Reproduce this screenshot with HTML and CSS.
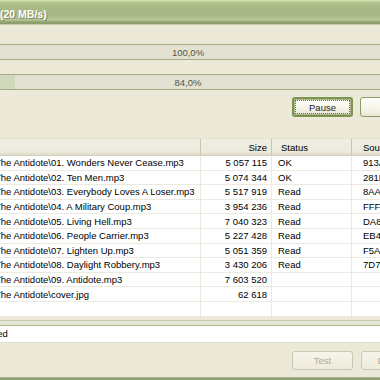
FILE: index.html
```html
<!DOCTYPE html>
<html>
<head>
<meta charset="utf-8">
<link rel="stylesheet" href="styles.css">
</head>
<body>
<div class="window">
  <div class="titlebar"><span class="title">(20 MB/s)</span></div>
  <div class="content">
    <div class="bar bar-one"><div class="fill fill-full"></div><span class="pct">100,0%</span></div>
    <div class="bar bar-two"><div class="fill" style="width:25px"></div><span class="pct">84,0%</span></div>
    <div class="actions">
      <button class="btn btn-default"><span class="focus">Pause</span></button>
      <button class="btn">Stop</button>
    </div>
    <div class="list">
      <div class="row head">
        <div class="c name"></div>
        <div class="c size">Size</div>
        <div class="c status">Status</div>
        <div class="c src">Source CRC</div>
      </div>
      <div class="row"><div class="c name">The Antidote\01. Wonders Never Cease.mp3</div><div class="c size">5 057 115</div><div class="c status">OK</div><div class="c src">913A42C1</div></div>
      <div class="row"><div class="c name">The Antidote\02. Ten Men.mp3</div><div class="c size">5 074 344</div><div class="c status">OK</div><div class="c src">281B77E0</div></div>
      <div class="row"><div class="c name">The Antidote\03. Everybody Loves A Loser.mp3</div><div class="c size">5 517 919</div><div class="c status">Read</div><div class="c src">8AA1C340</div></div>
      <div class="row"><div class="c name">The Antidote\04. A Military Coup.mp3</div><div class="c size">3 954 236</div><div class="c status">Read</div><div class="c src">FFF0921D</div></div>
      <div class="row"><div class="c name">The Antidote\05. Living Hell.mp3</div><div class="c size">7 040 323</div><div class="c status">Read</div><div class="c src">DA8E1F07</div></div>
      <div class="row"><div class="c name">The Antidote\06. People Carrier.mp3</div><div class="c size">5 227 428</div><div class="c status">Read</div><div class="c src">EB4C0A95</div></div>
      <div class="row"><div class="c name">The Antidote\07. Lighten Up.mp3</div><div class="c size">5 051 359</div><div class="c status">Read</div><div class="c src">F5A2B6D8</div></div>
      <div class="row"><div class="c name">The Antidote\08. Daylight Robbery.mp3</div><div class="c size">3 430 206</div><div class="c status">Read</div><div class="c src">7D7F3E11</div></div>
      <div class="row"><div class="c name">The Antidote\09. Antidote.mp3</div><div class="c size">7 603 520</div><div class="c status"></div><div class="c src"></div></div>
      <div class="row"><div class="c name">The Antidote\cover.jpg</div><div class="c size">62 618</div><div class="c status"></div><div class="c src"></div></div>
      <div class="row"><div class="c name"></div><div class="c size"></div><div class="c status"></div><div class="c src"></div></div>
    </div>
    <div class="sep"></div>
    <div class="log"><span class="log-text">Finished</span></div>
    <div class="actions bottom">
      <button class="btn" disabled>Test</button>
      <button class="btn" disabled>Delete</button>
    </div>
  </div>
  <div class="frame-bottom"></div>
</div>
</body>
</html>
```
FILE: styles.css
```css
html, body {
  margin: 0;
  padding: 0;
  width: 380px;
  height: 380px;
  overflow: hidden;
  background: #ece9d8;
}
body {
  font-family: "Liberation Sans", Arial, sans-serif;
  font-size: 9.5px;
  color: #000;
}
.window {
  width: 450px;
  margin-left: -10px;
  height: 380px;
  display: flex;
  flex-direction: column;
}
.titlebar {
  height: 24px;
  border-bottom: 1px solid #c3cca6;
  background: linear-gradient(to bottom, #dfe8bc 0, #c6d4a0 1px, #b1c18d 3px, #a7b785 9px, #a8b886 15px, #b6c696 20px, #a4b380 21px, #91a170 22px, #8c9b6b 24px);
  padding-left: 10px;
  display: flex;
  align-items: center;
}
.title {
  color: #fff;
  font-weight: bold;
  font-size: 10.5px;
  text-shadow: 1px 1px 0 #7d8d5c;
  margin-top: 3px;
}
.content {
  display: flex;
  flex-direction: column;
  flex: 1;
}
.bar {
  position: relative;
  height: 14px;
  border-top: 1px solid #a2ad86;
  border-bottom: 1px solid #a2ad86;
  background: #e2e1d2;
  display: flex;
  align-items: center;
  justify-content: center;
}
.bar-one { margin-top: 19px; }
.bar-two { margin-top: 14px; }
.fill {
  position: absolute;
  left: 0;
  top: 0;
  bottom: 0;
  background: #d1d7bb;
}
.fill-full { width: 0; }
.pct {
  position: relative;
  color: #55554a;
  font-size: 9.5px;
  margin-left: -54px;
  margin-top: 1px;
}
.actions {
  display: flex;
  justify-content: flex-end;
  gap: 7px;
  padding-right: 19px;
  margin-top: 7px;
}
.btn {
  width: 61px;
  height: 20px;
  border: 1px solid #8a9a68;
  border-radius: 3px;
  background: linear-gradient(to bottom, #fffff9 0, #f6f4e9 60%, #e8e5d2 100%);
  font-family: "Liberation Sans", Arial, sans-serif;
  font-size: 9.5px;
  color: #1c1c1c;
  padding: 0;
  display: flex;
  align-items: center;
  justify-content: center;
}
.btn-default {
  border: 2px solid #7c9450;
  box-shadow: inset 0 0 0 1px #a8b888;
}
.focus {
  display: flex;
  align-items: center;
  justify-content: center;
  width: 53px;
  height: 12px;
  outline: 1px dotted #6f6f60;
}
.btn:disabled {
  color: #aca899;
  border-color: #c9c7b6;
  background: linear-gradient(to bottom, #f6f4ea 0, #eeebdc 100%);
}
.list {
  margin-top: 21px;
  background: #fff;
}
.row {
  display: grid;
  grid-template-columns: 211px 71px 80px 88px;
  height: 14.6px;
  box-sizing: border-box;
  border-bottom: 1px solid #eceade;
  align-items: center;
  white-space: nowrap;
}
.row .c {
  overflow: hidden;
  height: 100%;
  display: flex;
  align-items: center;
  box-sizing: border-box;
  border-right: 1px solid #eceade;
}
.head {
  height: 18px;
  background: linear-gradient(to bottom, #efeee3 0, #ebeadc 80%, #dedac6 100%);
  border-bottom: 1px solid #d4d0bc;
  border-top: 1px solid #e4e2d2;
}
.head .c {
  border-right: 1px solid #c8c5b2;
}
.name { padding-left: 5px; }
.size { justify-content: flex-end; padding-right: 4px; }
.status { padding-left: 6px; }
.head .status { padding-left: 9px; }
.src { padding-left: 11px; }
.sep {
  margin-top: 3px;
  height: 4px;
  border-top: 1px solid #c3cbab;
  border-bottom: 1px solid #adb893;
  background: #e6e6d4;
}
.log {
  height: 16px;
  background: #fff;
  border-bottom: 1px solid #e0ddcc;
  display: flex;
  align-items: center;
}
.log-text {
  margin-left: -18px;
}
.bottom {
  margin-top: 8px;
  gap: 8px;
  padding-right: 18px;
}
.bottom .btn {
  height: 19px;
}
.frame-bottom {
  height: 3px;
  margin-top: auto;
  background: linear-gradient(to bottom, #b4c49a 0, #93a476 1px, #8a9c6c 3px);
}
```
